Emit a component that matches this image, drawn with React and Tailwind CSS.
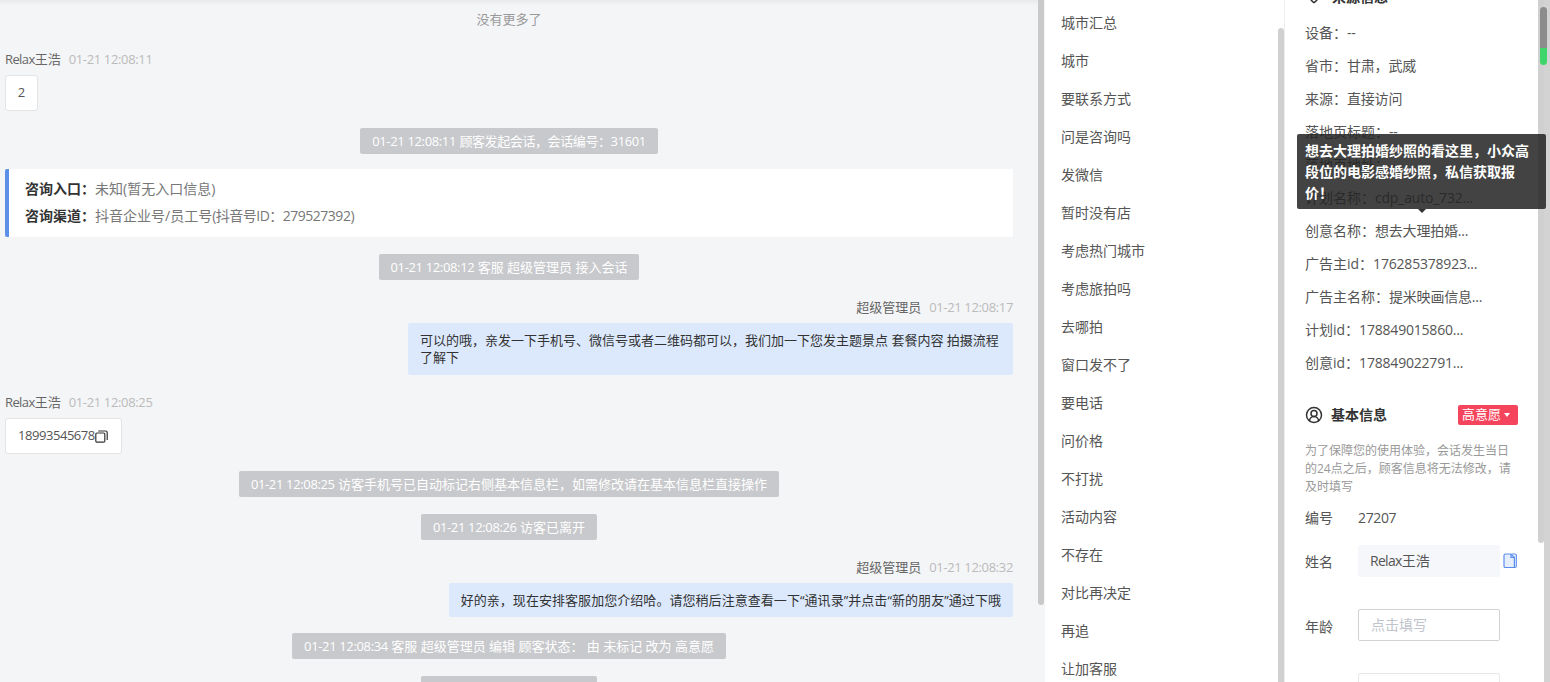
import { CircleUserRound, MapPin } from 'lucide-react';

const CM = '\uFF0C';
const CL = '\uFF1A';
const EX = '\uFF01';

const tags = ['城市汇总', '城市', '要联系方式', '问是咨询吗', '发微信', '暂时没有店', '考虑热门城市', '考虑旅拍吗', '去哪拍', '窗口发不了', '要电话', '问价格', '不打扰', '活动内容', '不存在', '对比再决定', '再追', '让加客服'];

const sourceRows = [
  ['设备', '--'],
  ['省市', `甘肃${CM}武威`],
  ['来源', '直接访问'],
  ['落地页标题', '--'],
  ['落地页地址', '--'],
  ['计划名称', 'cdp_auto_732...'],
  ['创意名称', '想去大理拍婚...'],
  ['广告主id', '176285378923...'],
  ['广告主名称', '提米映画信息...'],
  ['计划id', '178849015860...'],
  ['创意id', '178849022791...'],
];

// latin and digits sit a bit tighter than Open Sans in the reference
const Num = ({ children }) => <span className="tracking-[-0.35px]">{children}</span>;
const Relax = () => <><span className="tracking-[-0.6px]">Relax</span>王浩</>;

const SystemMsg = ({ time, children, className }) => (
  <div className={`flex justify-center ${className}`}>
    <div className="h-[26px] leading-[26px] px-3 bg-[#c8c9cc] text-white text-[13px] rounded-[2px] whitespace-nowrap">
      <Num>{time}</Num> {children}
    </div>
  </div>
);

const MsgHead = ({ name, time, right, className }) => (
  <div className={`flex h-[18px] leading-[18px] items-center text-[13px] ${right ? 'justify-end' : ''} ${className}`}>
    <span className="text-[#666]">{name}</span>
    <span className="ml-2 text-[#bbb]"><Num>{time}</Num></span>
  </div>
);

const CopyOutline = () => (
  <svg width="13" height="13" viewBox="0 0 13 13" fill="none" stroke="#333" strokeWidth="1.2">
    <rect x="0.8" y="3" width="9" height="9.2" rx="1.2" />
    <path d="M3.2 1h7.6c.8 0 1.4.6 1.4 1.4V10" />
  </svg>
);

const CopyBlue = () => (
  <svg width="14" height="16" viewBox="0 0 14 16" fill="none" stroke="#5b8def" strokeWidth="1.2">
    <path d="M1 2.500C1 1.700 1.600 1 2.400 1H8l3.400 3.400v10.100H2.400C1.600 14.500 1 13.900 1 13.100z" fill="#e6eefc" />
    <path d="M8 1v3.400h3.400M9 1h3c.7 0 1.300.6 1.300 1.300V13c0 .8-.6 1.500-1.300 1.500" />
  </svg>
);

export default function App() {
  return (
    <div className="flex h-[682px] w-[1550px] overflow-hidden bg-white font-['Open_Sans','Noto_Sans_CJK_SC',sans-serif] text-[#333]">
      {/* chat */}
      <div className="relative w-[1038px] shrink-0 bg-[#f4f5f7] pl-[5px] pr-[25px]">
        <div className="absolute top-0 left-0 right-0 h-[6px] bg-gradient-to-b from-[#e9eaec] to-transparent" />
        <div className="pt-[10px] h-[28px] leading-[18px] text-center text-[13px] text-[#999]">没有更多了</div>
        <MsgHead name={<Relax />} time="01-21 12:08:11" className="mt-[22px]" />
        <div className="mt-[7px] inline-flex h-[36px] w-[33px] items-center justify-center bg-white border border-[#e3e4e6] rounded-[3px] text-[13px] text-[#555]">2</div>
        <SystemMsg time="01-21 12:08:11" className="mt-[17px]">
          <span className="tracking-[-0.4px]">{`顾客发起会话${CM}会话编号${CL}31601`}</span>
        </SystemMsg>
        <div className="mt-[15px] h-[68px] bg-white border-l-4 border-[#5b8fe8] pl-4 pt-[6px] text-[14px] leading-[27px] rounded-l-[2px]">
          <div><b className="text-[#333]">{`咨询入口${CL}`}</b><span className="text-[#777]">未知(暂无入口信息)</span></div>
          <div>
            <b className="text-[#333]">{`咨询渠道${CL}`}</b>
            <span className="text-[#777]">抖音企业号/员工号<span className="tracking-[-0.5px]">{`(抖音号ID${CL}279527392)`}</span></span>
          </div>
        </div>
        <SystemMsg time="01-21 12:08:12" className="mt-[17px]">客服 超级管理员 接入会话</SystemMsg>
        <MsgHead right name="超级管理员" time="01-21 12:08:17" className="mt-[18px]" />
        <div className="mt-[7px] flex justify-end">
          <div className="w-[605px] h-[52px] px-3 py-[9px] bg-[#dce9fd] text-[13px] leading-[17px] text-[#333] rounded-[2px]">
            {`可以的哦${CM}亲发一下手机号、微信号或者二维码都可以${CM}我们加一下您发主题景点 套餐内容 拍摄流程了解下`}
          </div>
        </div>
        <MsgHead name={<Relax />} time="01-21 12:08:25" className="mt-[18px]" />
        <div className="mt-[7px] inline-flex h-[36px] w-[117px] items-center pl-3 bg-white border border-[#e3e4e6] rounded-[3px] text-[13px] text-[#555]">
          <span className="tracking-[-0.45px]">18993545678</span><CopyOutline />
        </div>
        <SystemMsg time="01-21 12:08:25" className="mt-[17px]">{`访客手机号已自动标记右侧基本信息栏${CM}如需修改请在基本信息栏直接操作`}</SystemMsg>
        <SystemMsg time="01-21 12:08:26" className="mt-[17px]">访客已离开</SystemMsg>
        <MsgHead right name="超级管理员" time="01-21 12:08:32" className="mt-[18px]" />
        <div className="mt-[7px] flex justify-end">
          <div className="h-[34px] leading-[34px] px-3 bg-[#dce9fd] text-[13px] text-[#333] tracking-[0.05px] rounded-[2px] whitespace-nowrap">
            {`好的亲${CM}现在安排客服加您介绍哈。请您稍后注意查看一下“通讯录”并点击“新的朋友”通过下哦`}
          </div>
        </div>
        <SystemMsg time="01-21 12:08:34" className="mt-[16px]">{`客服 超级管理员 编辑 顾客状态${CL} 由 未标记 改为 高意愿`}</SystemMsg>
        <SystemMsg time="01-21 12:08:36" className="mt-[17px]">访客已离开</SystemMsg>
      </div>
      {/* chat scrollbar */}
      <div className="w-[7px] shrink-0 bg-[#f4f5f7]">
        <div className="w-[6px] h-[605px] bg-[#c9c9c9] rounded-b-[3px]" />
      </div>

      {/* tag list */}
      <div className="w-[233px] shrink-0 pl-4 pt-[4px] text-[14px] text-[#555]">
        {tags.map((t) => (
          <div key={t} className="h-[38px] leading-[38px]">{t}</div>
        ))}
      </div>
      <div className="w-[6px] shrink-0 pt-[28px] bg-white">
        <div className="w-[6px] h-[654px] bg-[#d0d0d0] rounded-t-[3px]" />
      </div>
      <div className="w-px shrink-0 bg-[#eee]" />

      {/* customer info */}
      <div className="relative w-[253px] shrink-0 pl-5 pr-5 text-[14px] text-[#555]">
        <div className="-mt-[23px] h-[39px] pt-[9px] flex items-start gap-[9px] font-bold text-[#333]">
          <MapPin size={18} />
          来源信息
        </div>
        {sourceRows.map(([label, value]) => (
          <div key={label} className="h-[33px] leading-[33px] whitespace-nowrap">{label}{CL}<span className="tracking-[-0.2px]">{value}</span></div>
        ))}
        <div className="mt-[22px] h-[27px] flex items-center">
          <CircleUserRound size={18} strokeWidth={2} className="text-[#333]" />
          <span className="ml-2 font-bold text-[#333]">基本信息</span>
          <div className="ml-auto w-[60px] h-[20px] flex items-center pl-1 gap-[3px] bg-[#f5455c] text-white text-[13px] rounded-[2px]">
            高意愿
            <span className="w-0 h-0 border-x-[3px] border-x-transparent border-t-[4px] border-t-white" />
          </div>
        </div>
        <p className="mt-[14px] text-[12px] leading-[18px] text-[#999] w-[214px]">{`为了保障您的使用体验${CM}会话发生当日的24点之后${CM}顾客信息将无法修改${CM}请及时填写`}</p>
        <div className="mt-[8px] flex h-[26px] items-center">
          <span className="w-[53px]">编号</span>
          <Num>27207</Num>
        </div>
        <div className="mt-[15px] flex items-center">
          <span className="w-[53px]">姓名</span>
          <div className="w-[142px] h-[32px] leading-[32px] pl-3 bg-[#f5f7fa] text-[14px] rounded-[2px]"><span className="tracking-[-0.7px]">Relax</span>王浩</div>
          <span className="ml-[3px]"><CopyBlue /></span>
        </div>
        <div className="mt-[32px] flex items-center">
          <span className="w-[53px] pt-[2px]">年龄</span>
          <div className="w-[142px] h-[32px] leading-[30px] pl-3 border border-[#d0d2d6] text-[#c0c4cc] rounded-[2px]">点击填写</div>
        </div>
        <div className="mt-[32px] flex items-center">
          <span className="w-[53px]" />
          <div className="w-[142px] h-[32px] border border-[#e6e7ea] rounded-[2px]" />
        </div>
        {/* tooltip */}
        <div className="absolute z-10 left-[12px] top-[134px] w-[249px] h-[75px] px-2 pt-[6px] bg-[#222]/85 text-white font-bold text-[14px] leading-[21px] rounded-[2px]">
          {`想去大理拍婚纱照的看这里${CM}小众高段位的电影感婚纱照${CM}私信获取报价${EX}`}
          <span className="absolute left-[121px] top-full w-0 h-0 border-x-[4px] border-x-transparent border-t-[4px] border-t-[#333]" />
        </div>
      </div>

      {/* page scrollbar */}
      <div className="relative w-[6px] shrink-0">
        <div className="h-[543px] bg-[#d0d0d0] rounded-b-[3px]" />
      </div>
      <div className="relative w-[6px] shrink-0 bg-[#d3d3d3]">
        <div className="absolute -left-[4px] top-[7px] w-[7px] h-[58px] rounded-[4px] bg-gradient-to-b from-[#8c8c8c] from-70% to-[#3ed66a] to-70%" />
      </div>
    </div>
  );
}
